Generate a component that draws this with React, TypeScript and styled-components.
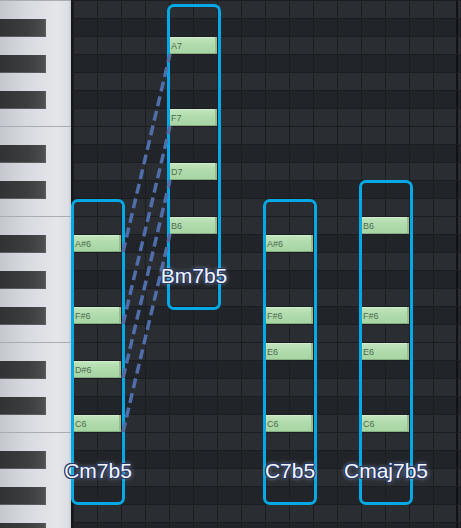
import React from "react";
import styled, { createGlobalStyle } from "styled-components";

const GlobalStyle = createGlobalStyle`
  html, body { margin: 0; padding: 0; background: #23262a; overflow: hidden; }
  * { box-sizing: border-box; }
`;

const ROW = 18;
const COL = 24;
const ROWS = 30;
const NAMES = ["B", "A#", "A", "G#", "G", "F#", "F", "E", "D#", "D", "C#", "C"];

const rowInfo = (r: number) => {
  const name = NAMES[r % 12];
  return { black: name.includes("#"), sep: name === "E" || name === "B" };
};

const Page = styled.div`
  display: flex;
  width: 461px;
  height: 528px;
  overflow: hidden;
  font-family: "Liberation Sans", Arial, sans-serif;
`;

const Keyboard = styled.div`
  flex: 0 0 73px;
  display: flex;
  flex-direction: column;
  border-right: 2px solid #16181b;
  background: linear-gradient(to right, #c4c7cd 0%, #d6d9de 35%, #e4e6ea 80%, #dcdfe4 96%, #c9ccd2 100%);
`;

const KeyRow = styled.div<{ $sep: boolean }>`
  flex: 0 0 ${ROW}px;
  height: ${ROW}px;
  border-top: 1px solid ${(p) => (p.$sep ? "#a9adb4" : "transparent")};
  position: relative;
`;

const BlackKey = styled.div`
  width: 46px;
  height: 18px;
  background: linear-gradient(to right, #323335 0%, #3c3d3f 60%, #4c4d4f 95%, #5c5d5f 100%);
  box-shadow: inset 0 -1px 0 #595b5e;
`;

const Roll = styled.div`
  flex: 1;
  position: relative;
  display: flex;
  flex-direction: column;
`;

const RollRow = styled.div<{ $dark: boolean }>`
  flex: 0 0 ${ROW}px;
  height: ${ROW}px;
  border-top: 1px solid #1b1d20;
  background-color: ${(p) => (p.$dark ? "#212428" : "#2a2e33")};
  background-image: linear-gradient(#101214, #101214),
    repeating-linear-gradient(to right, #1c1e21 0 1px, transparent 1px ${COL}px);
  background-size: 2px 100%, auto;
  background-position: 383px 0, 0 0;
  background-repeat: no-repeat, repeat;
`;

const Note = styled.div`
  position: absolute;
  width: 48px;
  height: 17px;
  padding-left: 2px;
  display: flex;
  align-items: center;
  font-size: 9px;
  color: #4f6b4f;
  background: linear-gradient(to bottom, #c4e6c0 0%, #b2dcae 40%, #a6d4a2 100%);
  box-shadow: inset 0 -1px 0 #86ad83, inset -2px 0 0 #95bf92, inset 0 1px 0 #d2eccf;
  z-index: 1;
`;

const ChordBox = styled.div`
  position: absolute;
  width: 54px;
  border: 3px solid #07a8e6;
  border-radius: 7px;
  display: flex;
  flex-direction: column;
  align-items: center;
  justify-content: flex-end;
  padding-bottom: 21px;
  z-index: 2;
`;

const ChordLabel = styled.div`
  font-family: "Liberation Sans", Arial, sans-serif;
  font-size: 21px;
  line-height: 21px;
  white-space: nowrap;
  color: #f4f7fc;
  text-shadow: 1px 0 0 #263766, -1px 0 0 #263766, 0 1px 0 #263766, 0 -1px 0 #263766,
    1px 1px 0 #263766, -1px -1px 0 #263766, 1px -1px 0 #263766, -1px 1px 0 #263766,
    0 0 4px rgba(210, 220, 240, 0.9);
`;

const Connectors = styled.svg`
  position: absolute;
  left: 0;
  top: 0;
  overflow: visible;
  pointer-events: none;
  z-index: 3;
`;

type Chord = { name: string; col: number; top: number; bottom: number; notes: [string, number][] };

const chords: Chord[] = [
  { name: "Cm7b5", col: 0, top: 199, bottom: 505, notes: [["A#6", 13], ["F#6", 17], ["D#6", 20], ["C6", 23]] },
  { name: "Bm7b5", col: 4, top: 4, bottom: 310, notes: [["A7", 2], ["F7", 6], ["D7", 9], ["B6", 12]] },
  { name: "C7b5", col: 8, top: 199, bottom: 505, notes: [["A#6", 13], ["F#6", 17], ["E6", 19], ["C6", 23]] },
  { name: "Cmaj7b5", col: 12, top: 180, bottom: 505, notes: [["B6", 12], ["F#6", 17], ["E6", 19], ["C6", 23]] },
];

const links: [number, number][] = [
  [13, 2],
  [17, 6],
  [20, 9],
  [23, 12],
];

export default function App() {
  const rows = Array.from({ length: ROWS }, (_, r) => r);
  return (
    <>
      <GlobalStyle />
      <Page>
        <Keyboard>
          {rows.map((r) => {
            const info = rowInfo(r);
            return <KeyRow key={r} $sep={info.sep}>{info.black && <BlackKey />}</KeyRow>;
          })}
        </Keyboard>
        <Roll>
          {rows.map((r) => (
            <RollRow key={r} $dark={rowInfo(r).black} />
          ))}
          {chords.map((c) =>
            c.notes.map(([n, r]) => (
              <Note key={c.name + n} style={{ left: c.col * COL, top: r * ROW + 1 }}>
                {n}
              </Note>
            ))
          )}
          {chords.map((c) => (
            <ChordBox key={c.name} style={{ left: c.col * COL - 2, top: c.top, height: c.bottom - c.top }}>
              <ChordLabel>{c.name}</ChordLabel>
            </ChordBox>
          ))}
          <Connectors width="200" height="528">
            {links.map(([a, b]) => (
              <line
                key={a}
                x1={50}
                y1={(a + 1) * ROW}
                x2={97}
                y2={(b + 1) * ROW}
                stroke="#4f6eaa"
                strokeWidth={3.5}
                strokeDasharray="10 5"
              />
            ))}
          </Connectors>
        </Roll>
      </Page>
    </>
  );
}
